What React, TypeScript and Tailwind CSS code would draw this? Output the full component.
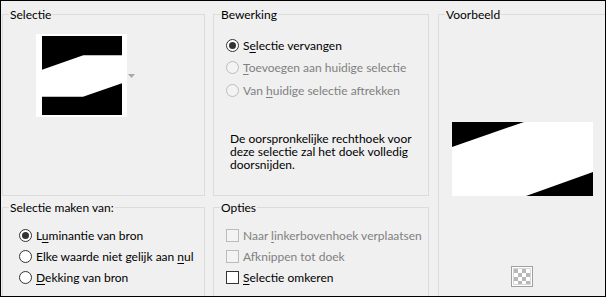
import React from "react";

const FONT = "font-['Lato','Noto_Sans',sans-serif]";

function Radio({ checked, disabled }: { checked?: boolean; disabled?: boolean }) {
  return (
    <span
      className={
        disabled
          ? "w-[13px] h-[13px] shrink-0 rounded-full border border-[#bcbcbc] bg-[#f3f3f3] flex items-center justify-center"
          : "w-[13px] h-[13px] shrink-0 rounded-full border border-[#333333] bg-white flex items-center justify-center"
      }
    >
      {checked && <span className="w-[7px] h-[7px] rounded-full bg-[#333333]" />}
    </span>
  );
}

function Check({ disabled }: { disabled?: boolean }) {
  return (
    <span
      className={
        disabled
          ? "w-[13px] h-[13px] shrink-0 border border-[#bcbcbc] bg-[#f3f3f3]"
          : "w-[13px] h-[13px] shrink-0 border border-[#333333] bg-white"
      }
    />
  );
}

function Group({
  label,
  className,
  children,
}: {
  label: string;
  className: string;
  children?: React.ReactNode;
}) {
  return (
    <div className={"relative shrink-0 border border-[#dcdcdc] " + className}>
      <span className="absolute top-[-8px] left-[6px] px-[1px] bg-[#f0f0f0] leading-[15px] text-black">
        {label}
      </span>
      {children}
    </div>
  );
}

function Row({
  children,
  disabled,
}: {
  children: React.ReactNode;
  disabled?: boolean;
}) {
  return (
    <div
      className={
        disabled
          ? "h-[22.5px] flex items-center gap-[4px] text-[#808080]"
          : "h-[22.5px] flex items-center gap-[4px] text-black"
      }
    >
      {children}
    </div>
  );
}

function Row2({
  children,
  disabled,
}: {
  children: React.ReactNode;
  disabled?: boolean;
}) {
  return (
    <div
      className={
        disabled
          ? "h-[21px] flex items-center gap-[4px] text-[#808080]"
          : "h-[21px] flex items-center gap-[4px] text-black"
      }
    >
      {children}
    </div>
  );
}

const U = ({ children }: { children: React.ReactNode }) => (
  <span className="underline underline-offset-[2px]">{children}</span>
);

export default function App() {
  return (
    <div
      className={
        "w-[606px] h-[297px] box-border border border-black bg-[#f0f0f0] overflow-hidden flex items-start text-[12px] leading-[15px] " +
        FONT
      }
    >
      {/* left column */}
      <div className="ml-[1px] mt-[13px] w-[203px] shrink-0 flex flex-col gap-[11px]">
        <Group label="Selectie" className="h-[182px] flex items-start pl-[33px] pt-[19px]">
          <svg width="91" height="83" viewBox="0 0 91 83" className="shrink-0">
            <rect x="0" y="0" width="91" height="83" fill="#ffffff" />
            <polygon points="6,2 86,2 86,21.3 47.3,21.3 6,35.7" fill="#000000" />
            <polygon points="6,62.7 47,62.7 86,49.3 86,81 6,81" fill="#000000" />
          </svg>
          <svg width="7" height="4" viewBox="0 0 7 4" className="ml-[1px] mt-[40px] shrink-0">
            <polygon points="0,0 7,0 3.5,4" fill="#a8a8a8" />
          </svg>
        </Group>
        <Group label="Selectie maken van:" className="h-[120px] pl-[16px] pt-[16.5px]">
          <Row2>
            <Radio checked />
            <span>
              L<U>u</U>minantie van bron
            </span>
          </Row2>
          <Row2>
            <Radio />
            <span>
              Elke waarde niet gelijk aan <U>n</U>ul
            </span>
          </Row2>
          <Row2>
            <Radio />
            <span>
              <U>D</U>ekking van bron
            </span>
          </Row2>
        </Group>
      </div>

      {/* middle column */}
      <div className="ml-[8px] mt-[13px] w-[216px] shrink-0 flex flex-col gap-[11px]">
        <Group label="Bewerking" className="h-[182px] pl-[12px] pt-[19px]">
          <Row>
            <Radio checked />
            <span>
              S<U>e</U>lectie vervangen
            </span>
          </Row>
          <Row disabled>
            <Radio disabled />
            <span>
              <U>T</U>oevoegen aan huidige selectie
            </span>
          </Row>
          <Row disabled>
            <Radio disabled />
            <span>
              Van <U>h</U>uidige selectie aftrekken
            </span>
          </Row>
          <p className="mt-[30px] ml-[4px] leading-[13px] text-black">
            De oorspronkelijke rechthoek voor
            <br />
            deze selectie zal het doek volledig
            <br />
            doorsnijden.
          </p>
        </Group>
        <Group label="Opties" className="h-[120px] pl-[12px] pt-[16.5px]">
          <Row2 disabled>
            <Check disabled />
            <span>
              Naar <U>l</U>inkerbovenhoek verplaatsen
            </span>
          </Row2>
          <Row2 disabled>
            <Check disabled />
            <span>
              Af<U>k</U>nippen tot doek
            </span>
          </Row2>
          <Row2>
            <Check />
            <span>
              <U>S</U>electie omkeren
            </span>
          </Row2>
        </Group>
      </div>

      {/* right column */}
      <div className="ml-[9px] mt-[13px] w-[167px] shrink-0 flex">
        <Group
          label="Voorbeeld"
          className="w-[167px] h-[300px] border-r-0 flex flex-col items-center"
        >
          <svg width="141" height="74" viewBox="0 0 141 74" className="mt-[107px] shrink-0">
            <rect x="0" y="0" width="141" height="74" fill="#ffffff" />
            <polygon points="0,0 72,0 0,25" fill="#000000" />
            <polygon points="74,74 141,50 141,74" fill="#000000" />
          </svg>
          <svg width="22" height="21" viewBox="0 0 22 21" className="mt-[70px] shrink-0">
            <rect x="0.5" y="0.5" width="21" height="20" fill="#ffffff" stroke="#a0a0a0" />
            <g fill="#b8b8b8">
              <rect x="3" y="3" width="4" height="4" />
              <rect x="11" y="3" width="4" height="4" />
              <rect x="7" y="7" width="4" height="4" />
              <rect x="15" y="7" width="4" height="4" />
              <rect x="3" y="11" width="4" height="4" />
              <rect x="11" y="11" width="4" height="4" />
              <rect x="7" y="15" width="4" height="3" />
              <rect x="15" y="15" width="4" height="3" />
            </g>
            <rect x="2.5" y="2.5" width="17" height="16" fill="none" stroke="#d8d8d8" />
          </svg>
        </Group>
      </div>
    </div>
  );
}
